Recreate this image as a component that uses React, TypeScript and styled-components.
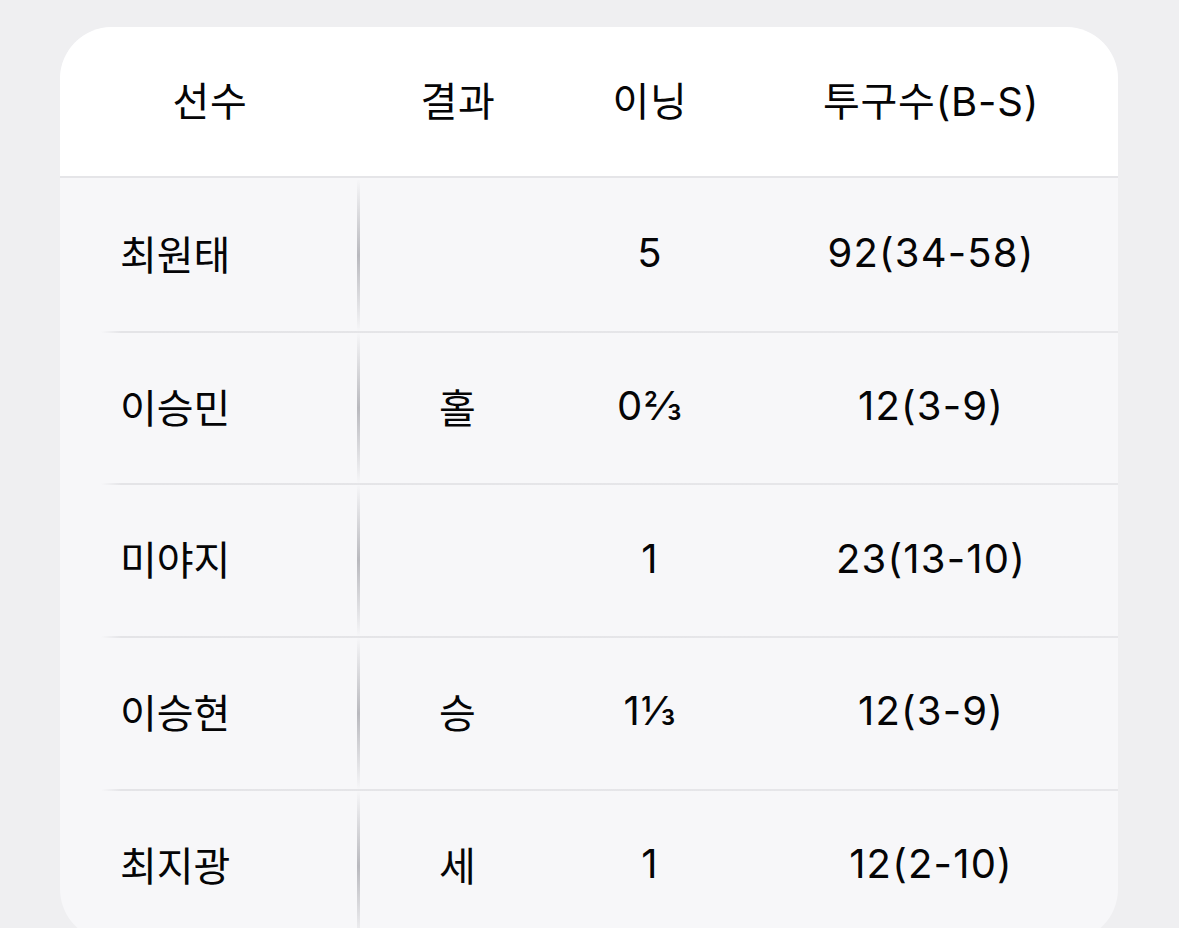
import React from "react";
import styled, { createGlobalStyle } from "styled-components";

interface Pitcher {
  name: string;
  result: string;
  innings: string;
  pitches: string;
}

const pitchers: Pitcher[] = [
  { name: "최원태", result: "", innings: "5", pitches: "92(34-58)" },
  { name: "이승민", result: "홀", innings: "0⅔", pitches: "12(3-9)" },
  { name: "미야지", result: "", innings: "1", pitches: "23(13-10)" },
  { name: "이승현", result: "승", innings: "1⅓", pitches: "12(3-9)" },
  { name: "최지광", result: "세", innings: "1", pitches: "12(2-10)" },
];

const GlobalStyle = createGlobalStyle`
  html, body {
    margin: 0;
    padding: 0;
    background: #efeff1;
    font-family: "Inter", "Noto Sans CJK KR", sans-serif;
    color: #050506;
  }
`;

const Page = styled.div`
  padding: 27px 61px 0 60px;
  height: 928px;
  box-sizing: border-box;
  overflow: hidden;
`;

const Card = styled.div`
  border-radius: 52px;
  overflow: hidden;
  background: #f7f7f9;
`;

const Grid = styled.div`
  display: grid;
  grid-template-columns: 300px 196px 188px 1fr;
`;

const HeaderRow = styled(Grid)`
  height: 149px;
  background: #ffffff;
  border-bottom: 2px solid #e5e5e8;
`;

const HeadCell = styled.div`
  display: flex;
  align-items: center;
  justify-content: center;
  font-size: 40px;
  letter-spacing: 0.8px;
  padding-bottom: 6px;
`;

const BodyRow = styled(Grid)<{ $first?: boolean }>`
  height: 150.7px;
  border-top: 2px solid;
  border-image: ${(p) =>
      p.$first
        ? "linear-gradient(to right, #f7f7f9, #f7f7f9)"
        : "linear-gradient(to right, rgba(228,228,231,0) 42px, #e4e4e7 62px, #e7e7ea)"}
    1;
`;

const Cell = styled.div<{ $align?: "left" | "center" }>`
  display: flex;
  align-items: center;
  justify-content: ${(p) => (p.$align === "left" ? "flex-start" : "center")};
  padding-left: ${(p) => (p.$align === "left" ? "60px" : "0")};
  padding-bottom: 5px;
  font-size: 40px;
  letter-spacing: 1.2px;
`;

const NameCell = styled(Cell)`
  letter-spacing: 0;
  border-right: 3px solid;
  border-image: linear-gradient(
      to bottom,
      rgba(190, 190, 195, 0) 0%,
      #b9b9be 50%,
      rgba(190, 190, 195, 0) 100%
    )
    1;
`;

const App: React.FC = () => {
  return (
    <>
      <GlobalStyle />
      <Page>
        <Card>
          <HeaderRow>
            <HeadCell>선수</HeadCell>
            <HeadCell>결과</HeadCell>
            <HeadCell>이닝</HeadCell>
            <HeadCell>투구수(B-S)</HeadCell>
          </HeaderRow>
          {pitchers.map((p, i) => (
            <BodyRow key={p.name} $first={i === 0}>
              <NameCell $align="left">{p.name}</NameCell>
              <Cell>{p.result}</Cell>
              <Cell>{p.innings}</Cell>
              <Cell>{p.pitches}</Cell>
            </BodyRow>
          ))}
        </Card>
      </Page>
    </>
  );
};

export default App;
